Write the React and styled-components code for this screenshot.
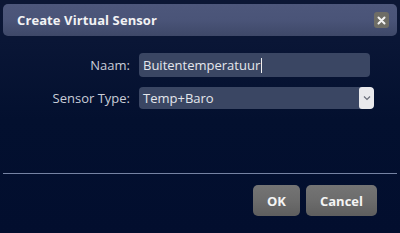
import React from "react";
import styled, { createGlobalStyle } from "styled-components";

const GlobalStyle = createGlobalStyle`
  html, body {
    margin: 0;
    padding: 0;
    background: #03102f;
  }
  body {
    font-family: "Open Sans", "Noto Sans", "Liberation Sans", sans-serif;
  }
`;

const Dialog = styled.section`
  width: 400px;
  height: 233px;
  box-sizing: border-box;
  display: flex;
  flex-direction: column;
  padding: 4px 3px 0 3px;
  background: linear-gradient(#0c1735 0px, #0a1636 40px, #03102f 120px, #020e2e);
`;

const TitleBar = styled.header`
  height: 32px;
  box-sizing: border-box;
  display: flex;
  align-items: center;
  justify-content: space-between;
  padding: 0 8px 0 14px;
  border-radius: 5px;
  background: linear-gradient(#4d577b 0%, #4a5478 50%, #3e4868 100%);
`;

const Title = styled.h1`
  margin: 0;
  font-size: 13px;
  font-weight: 700;
  color: #f2f2f4;
  letter-spacing: 0.1px;
`;

const CloseButton = styled.button`
  width: 15px;
  height: 16px;
  padding: 0;
  border: none;
  border-radius: 3px;
  background: #6e6d66;
  display: flex;
  align-items: center;
  justify-content: center;
`;

const Body = styled.div`
  display: flex;
  flex-direction: column;
  gap: 10px;
  padding: 17px 0 0 0;
  height: 138px;
  box-sizing: border-box;
  border-bottom: 1px solid #7683a3;
`;

const Row = styled.div`
  display: grid;
  grid-template-columns: 127px auto;
  column-gap: 9px;
  align-items: center;
`;

const Label = styled.label`
  text-align: right;
  font-size: 13px;
  color: #c9cdd8;
`;

const Field = styled.div`
  width: ${(p) => p.w}px;
  height: ${(p) => p.h}px;
  box-sizing: border-box;
  border-radius: 4px;
  background: #3a4663;
  display: flex;
  align-items: center;
  padding-left: 4px;
  font-size: 13px;
  color: #e4e6ec;
  overflow: hidden;
`;

const Caret = styled.span`
  display: inline-block;
  width: 1px;
  height: 15px;
  background: #f0f0f0;
  margin-left: 1px;
`;

const SelectText = styled.span`
  flex: 1;
`;

const Arrow = styled.span`
  width: 15px;
  height: 100%;
  background: #e9e9ec;
  border-radius: 3px;
  display: flex;
  align-items: center;
  justify-content: center;
`;

const Footer = styled.footer`
  display: flex;
  justify-content: flex-end;
  gap: 6px;
  padding: 11px 20px 0 0;
`;

const Button = styled.button`
  height: 31px;
  padding: 0 ${(p) => p.px}px;
  border: none;
  border-radius: 5px;
  background: linear-gradient(#747474 0%, #6c6c6c 50%, #5e5e5e 100%);
  color: #f4f4f4;
  font-family: inherit;
  font-size: 13px;
  font-weight: 700;
`;

export default function App() {
  return (
    <>
      <GlobalStyle />
      <Dialog>
        <TitleBar>
          <Title>Create Virtual Sensor</Title>
          <CloseButton>
            <svg width="9" height="9" viewBox="0 0 9 9">
              <path d="M1.5 1.5 L7.5 7.5 M7.5 1.5 L1.5 7.5" stroke="#f4f4f4" strokeWidth="2" strokeLinecap="round" />
            </svg>
          </CloseButton>
        </TitleBar>
        <Body>
          <Row>
            <Label>Naam:</Label>
            <Field w={231} h={24}>
              Buitentemperatuur
              <Caret />
            </Field>
          </Row>
          <Row>
            <Label>Sensor Type:</Label>
            <Field w={235} h={22}>
              <SelectText>Temp+Baro</SelectText>
              <Arrow>
                <svg width="8" height="6" viewBox="0 0 8 6">
                  <path d="M1 1.5 L4 4.5 L7 1.5" stroke="#6a6e7a" strokeWidth="1.2" fill="none" />
                </svg>
              </Arrow>
            </Field>
          </Row>
        </Body>
        <Footer>
          <Button px={14}>OK</Button>
          <Button px={14}>Cancel</Button>
        </Footer>
      </Dialog>
    </>
  );
}
